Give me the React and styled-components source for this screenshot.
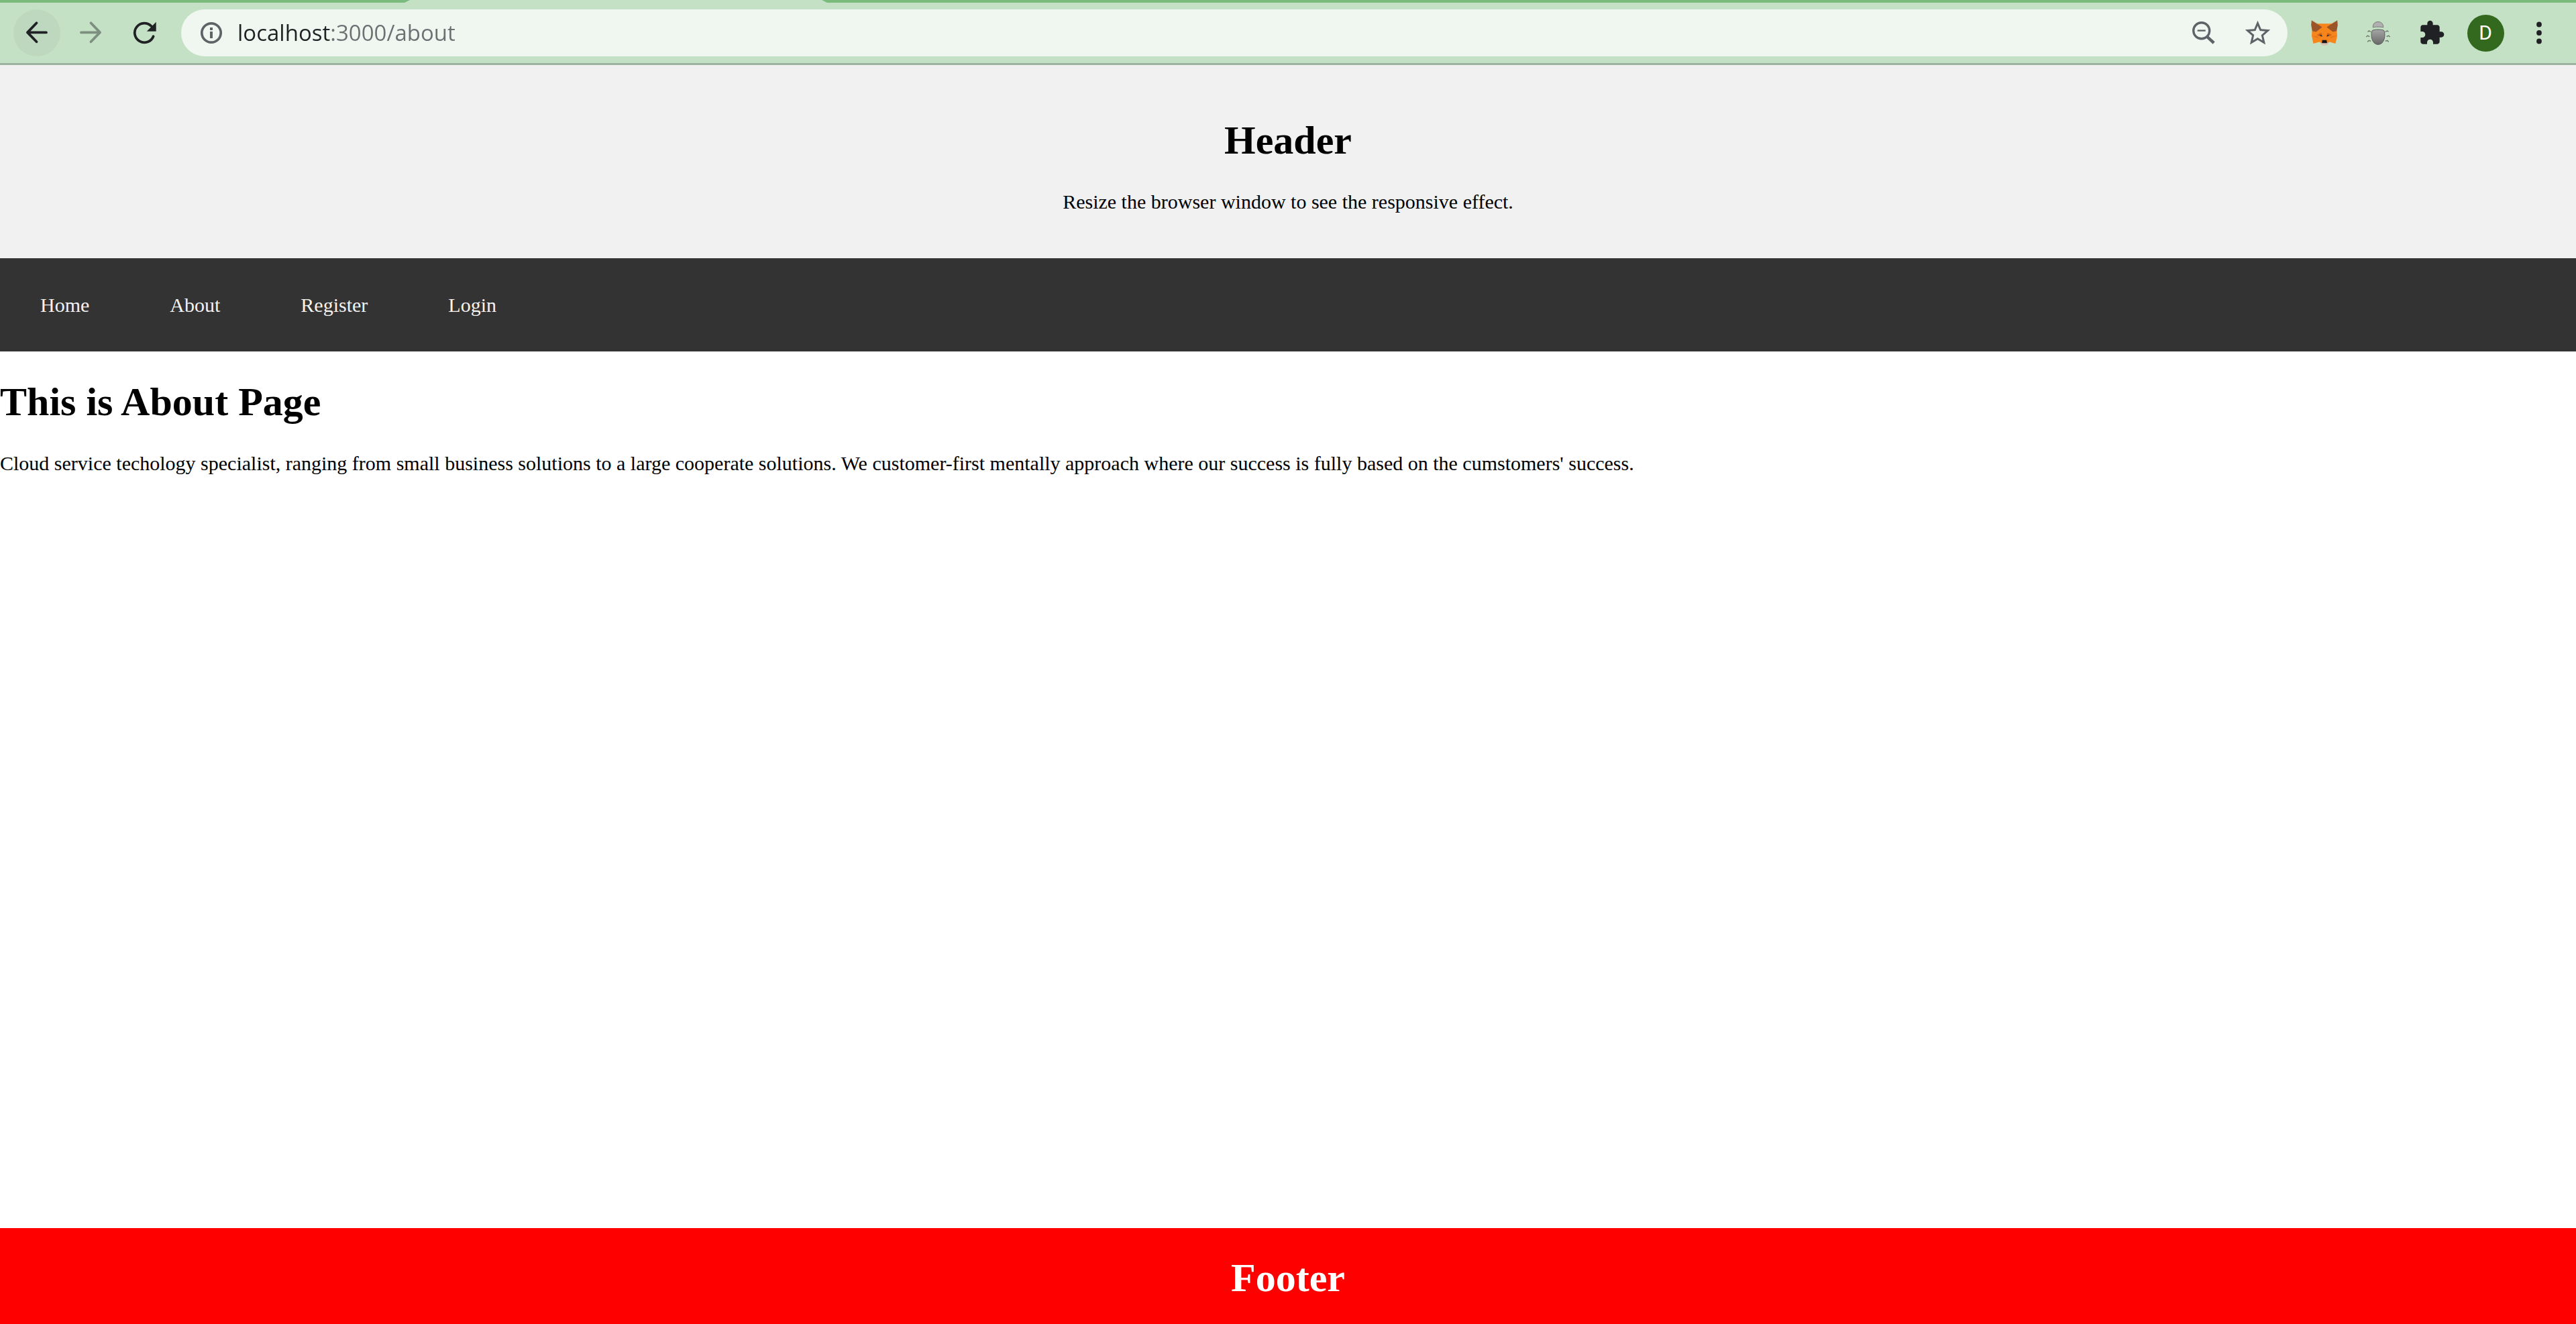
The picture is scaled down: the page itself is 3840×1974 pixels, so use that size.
import React, { useState } from "react";
import styled, { createGlobalStyle } from "styled-components";

const GlobalStyle = createGlobalStyle`
  *, *::before, *::after { box-sizing: border-box; }
  body {
    margin: 0;
    background: #fff;
    color: #000;
    font: 30px/34px "Liberation Serif", "Times New Roman", serif;
  }
`;

const Window = styled.div`
  display: flex;
  flex-direction: column;
  min-height: 100vh;
`;

/* ---------- browser chrome ---------- */

const TabStrip = styled.div`
  display: flex;
  height: 4px;
  padding-left: 603px;
  background: #7aba7d;
  overflow: hidden;
`;

const ActiveTab = styled.div`
  width: 630px;
  background: #c5e1c5;
  clip-path: polygon(8px 0, calc(100% - 8px) 0, 100% 100%, 0 100%);
`;

const Toolbar = styled.div`
  display: flex;
  align-items: center;
  gap: 20px;
  padding: 10px 20px;
  background: #c5e1c5;
  border-bottom: 3px solid #9eb4a0;
`;

const ButtonGroup = styled.div`
  display: flex;
  gap: 10px;
`;

const IconButton = styled.button`
  display: flex;
  align-items: center;
  justify-content: center;
  width: 70px;
  height: 70px;
  padding: 0;
  border: 0;
  border-radius: 50%;
  background: ${(p) => (p.$active ? "#bdd8be" : "transparent")};
  color: ${(p) => p.$color || "#202124"};
`;

const Icon = styled.svg`
  display: block;
  flex: none;
  width: ${(p) => p.$size || 40}px;
  height: ${(p) => p.$size || 40}px;
`;

const AddressBar = styled.div`
  display: flex;
  flex: 1;
  align-items: center;
  height: 70px;
  padding: 0 10px;
  border-radius: 35px;
  background: #f0f7f0;
`;

/* the host part is darker than the port and path after it */
const AddressInput = styled.input`
  flex: 1;
  min-width: 0;
  height: 46px;
  padding: 0 4px;
  border: 0;
  outline: 0;
  font: 33px/46px "Open Sans", "Noto Sans", sans-serif;
  color: transparent;
  background: linear-gradient(to right, #202124 142px, #6b7073 142px);
  background-clip: text;
  -webkit-background-clip: text;
`;

const Avatar = styled.span`
  display: flex;
  align-items: center;
  justify-content: center;
  width: 55px;
  height: 55px;
  border-radius: 50%;
  background: #33691e;
  color: #fff;
  font: 30px/34px Roboto, sans-serif;
`;

/* ---------- page ---------- */

const PageHeader = styled.header`
  padding: 38px;
  padding-bottom: 37px;
  background: #f1f1f1;
  text-align: center;
`;

const Title = styled.h1`
  margin: 0;
  padding: 40px 0;
  font-size: 60px;
  line-height: 69px;
`;

const Text = styled.p`
  margin: 0 0 30px;
`;

const Nav = styled.nav`
  display: flex;
  background: #333;
`;

const NavLink = styled.a`
  padding: 53px 60px 52px;
  color: #f2f2f2;
  text-decoration: none;
`;

const Main = styled.main`
  flex: 1;
  padding-top: 1px;
`;

const Footer = styled.footer`
  height: 143px;
  background: #f00;
  color: #fff;
  text-align: center;
`;

/* ---------- icons ---------- */

const stroke = {
  fill: "none",
  stroke: "currentColor",
  strokeWidth: 3.8,
  strokeLinecap: "round",
  strokeLinejoin: "round",
};

const BackIcon = () => (
  <Icon viewBox="0 0 40 40">
    <path d="M19.5 5.3 6 19.4 19.5 33.3M6 19.4H34" {...stroke} />
  </Icon>
);

const ForwardIcon = () => (
  <Icon viewBox="0 0 40 40">
    <path d="M20.5 5.3 34 19.4 20.5 33.3M34 19.4H6" {...stroke} />
  </Icon>
);

const ReloadIcon = () => (
  <Icon viewBox="0 0 40 40">
    <path d="M33.6 25.2A14.4 14.4 0 1 1 30.6 10" {...stroke} />
    <path d="M37.7 3.8V17.7H23.8Z" fill="currentColor" />
  </Icon>
);

const InfoIcon = () => (
  <Icon viewBox="0 0 40 40">
    <circle cx="20" cy="20" r="14.2" fill="none" stroke="currentColor" strokeWidth="3.7" />
    <path d="M18 12h4v4h-4zM18 18h4v10h-4z" fill="currentColor" />
  </Icon>
);

const ZoomOutIcon = () => (
  <Icon viewBox="0 0 40 40">
    <circle cx="16.7" cy="16.7" r="12" fill="none" stroke="currentColor" strokeWidth="3.4" />
    <path d="M10.7 15.4h12v2.4h-12z" fill="currentColor" />
    <path d="M25.5 26.2 35.2 35" stroke="currentColor" strokeWidth="4.4" />
  </Icon>
);

const StarIcon = () => (
  <Icon $size={45} viewBox="0 0 24 24">
    <path
      fill="currentColor"
      d="M22 9.24l-7.19-.62L12 2 9.19 8.63 2 9.24l5.46 4.73L5.82 21 12 17.27 18.18 21l-1.63-7.03L22 9.24zM12 15.4l-3.76 2.27 1-4.28-3.32-2.88 4.38-.38L12 6.1l1.71 4.04 4.38.38-3.32 2.88 1 4.28L12 15.4z"
    />
  </Icon>
);

const FoxIcon = () => (
  <Icon viewBox="0 0 40 40">
    <path fill="#f6851b" d="M10 6.2H30L38.5 17 39 24.5 36.5 36 27.5 33.5 24.5 37H15.5L12.5 33.5 3.5 36 1 24.5 1.5 17Z" />
    <path fill="#e97a1c" d="M1 24.5H10L12 29ZM39 24.5H30L28 29Z" />
    <path fill="#e2761b" d="M.8 1.3 17 11 10 6.2ZM39.2 1.3 23 11 30 6.2Z" />
    <path fill="#9a5428" d="M.8 1.3 16.6 11.5 7.5 18.5 1.8 17.2 .2 8.5ZM39.2 1.3 23.4 11.5 32.5 18.5 38.2 17.2 39.8 8.5Z" />
    <path fill="#cd6116" d="M9 22.5 15.5 20 17.3 25.5 12 25ZM31 22.5 24.5 20 22.7 25.5 28 25Z" />
    <path fill="#233447" d="M13 23 15.5 23 16.5 25.5 14.5 25ZM27 23 24.5 23 23.5 25.5 25.5 25Z" />
    <path fill="#d7c1b3" d="M12.5 33.5 16 35H24L27.5 33.5 24.5 38 22.5 38.8H17.5L15.5 38Z" />
    <path fill="#161616" d="M16.8 30.7H23.2L24 35.2H16Z" />
  </Icon>
);

const BugIcon = () => (
  <Icon viewBox="0 0 40 40">
    <defs>
      <linearGradient id="bugShell" x1="0" y1="0" x2="0" y2="1">
        <stop offset="0" stopColor="#a6a6a6" />
        <stop offset="1" stopColor="#686868" />
      </linearGradient>
    </defs>
    <path
      d="M4.5 18.5 6.5 16.8 9.3 18.7M2.3 26 4.3 24.2 7.3 25.7M4.3 33.5 6.3 31.3 9.3 32.3M35.5 18.5 33.5 16.8 30.7 18.7M37.7 26 35.7 24.2 32.7 25.7M35.7 33.5 33.7 31.3 30.7 32.3"
      fill="none"
      stroke="#697269"
      strokeWidth="1.3"
      strokeLinejoin="round"
    />
    <path d="M12.3 12C12 7 15 3.5 20 3.5S28 7 27.7 12C25 10.8 15 10.8 12.3 12Z" fill="#b0b0b0" stroke="#777" strokeWidth="1" />
    <path d="M11.3 16.5C15 14.5 25 14.5 28.7 16.5 31.5 22 30 37.3 20 37.4 10 37.3 8.500 22 11.3 16.5Z" fill="url(#bugShell)" stroke="#5c5c5c" strokeWidth="1" />
  </Icon>
);

const PuzzleIcon = () => (
  <Icon viewBox="0 0 24 24">
    <path
      fill="currentColor"
      d="M20.5 11H19V7c0-1.1-.9-2-2-2h-4V3.5C13 2.12 11.88 1 10.5 1S8 2.12 8 3.5V5H4c-1.1 0-1.99.9-1.99 2v3.8H3.5c1.49 0 2.7 1.21 2.7 2.7s-1.21 2.7-2.7 2.7H2V20c0 1.1.9 2 2 2h3.8v-1.5c0-1.49 1.21-2.7 2.7-2.7 1.49 0 2.7 1.21 2.7 2.7V22H17c1.1 0 2-.9 2-2v-4h1.5c1.38 0 2.5-1.12 2.5-2.5S21.88 11 20.5 11z"
    />
  </Icon>
);

const MenuIcon = () => (
  <Icon viewBox="0 0 40 40">
    <g fill="currentColor">
      <circle cx="20" cy="7.5" r="3.9" />
      <circle cx="20" cy="20" r="3.9" />
      <circle cx="20" cy="32.5" r="3.9" />
    </g>
  </Icon>
);

const links = ["Home", "About", "Register", "Login"];

function BrowserToolbar() {
  const [url, setUrl] = useState("localhost:3000/about");
  return (
    <>
      <TabStrip>
        <ActiveTab />
      </TabStrip>
      <Toolbar>
        <ButtonGroup>
          <IconButton $active aria-label="Back"><BackIcon /></IconButton>
          <IconButton $color="#7d9080" aria-label="Forward"><ForwardIcon /></IconButton>
          <IconButton aria-label="Reload"><ReloadIcon /></IconButton>
        </ButtonGroup>
        <AddressBar>
          <IconButton $color="#5f6368" aria-label="Site information"><InfoIcon /></IconButton>
          <AddressInput
            aria-label="Address"
            spellCheck={false}
            value={url}
            onChange={(e) => setUrl(e.target.value)}
          />
          <ButtonGroup>
            <IconButton $color="#5f6368" aria-label="Zoom"><ZoomOutIcon /></IconButton>
            <IconButton $color="#5f6368" aria-label="Bookmark"><StarIcon /></IconButton>
          </ButtonGroup>
        </AddressBar>
        <ButtonGroup>
          <IconButton aria-label="MetaMask"><FoxIcon /></IconButton>
          <IconButton aria-label="Debugger"><BugIcon /></IconButton>
          <IconButton aria-label="Extensions"><PuzzleIcon /></IconButton>
          <IconButton aria-label="Profile"><Avatar>D</Avatar></IconButton>
          <IconButton aria-label="Menu"><MenuIcon /></IconButton>
        </ButtonGroup>
      </Toolbar>
    </>
  );
}

export default function App() {
  return (
    <Window>
      <GlobalStyle />
      <BrowserToolbar />
      <PageHeader>
        <Title>Header</Title>
        <Text>Resize the browser window to see the responsive effect.</Text>
      </PageHeader>
      <Nav>
        {links.map((name) => (
          <NavLink key={name} href={`#${name.toLowerCase()}`}>{name}</NavLink>
        ))}
      </Nav>
      <Main>
        <Title>This is About Page</Title>
        <Text>
          Cloud service techology specialist, ranging from small business solutions to a large
          cooperate solutions. We customer-first mentally approach where our success is fully
          based on the cumstomers' success.
        </Text>
      </Main>
      <Footer>
        <Title as="h2">Footer</Title>
      </Footer>
    </Window>
  );
}
